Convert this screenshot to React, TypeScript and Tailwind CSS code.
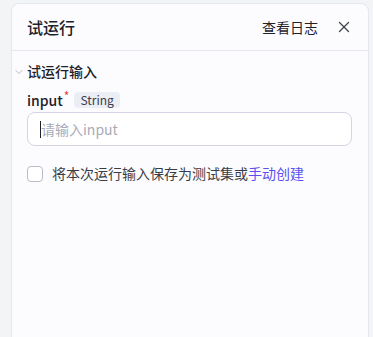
import { X, ChevronDown } from "lucide-react";

export default function App() {
  return (
    <div
      className="h-[337px] w-[373px] overflow-hidden bg-[#f3f4f6] pl-[11px] pr-[4px] pt-[3px]"
      style={{ fontFamily: '"Noto Sans CJK SC", "Noto Sans", sans-serif' }}
    >
      <div className="h-[360px] rounded-lg border border-[#e6e7ee] bg-[#fcfcfe]">
        {/* header */}
        <div className="flex h-[47px] items-center justify-between border-b border-[#e6e7ee] pl-[15px] pr-[15px]">
          <span className="text-[16px] font-medium text-[#1f2129]">试运行</span>
          <div className="flex items-center gap-[17px]">
            <span className="text-[14px] text-[#1f2129]">查看日志</span>
            <X size={18} strokeWidth={1.7} className="text-[#41434d]" />
          </div>
        </div>

        {/* section */}
        <div className="pt-[11px]">
          <div className="flex h-[18px] items-center pl-[1px]">
            <ChevronDown size={12} strokeWidth={1.6} className="mt-[2px] text-[#a6a8b4]" />
            <span className="ml-[2px] text-[14px] font-medium text-[#1f2129]">试运行输入</span>
          </div>

          <div className="pl-[15px] pr-[16px]">
            <div className="mt-[12px] flex h-[16px] items-center">
              <span className="text-[14px] font-medium text-[#1f2129]">input</span>
              <span className="relative -top-[4px] ml-[1px] text-[12px] leading-none text-[#f03e3e]">*</span>
              <span className="ml-[5px] rounded-[4px] bg-[#eceef6] px-[6px] text-[12px] leading-[16px] text-[#3a3c4a]">
                String
              </span>
            </div>

            <div className="mt-[4px] flex h-[34px] items-center rounded-[8px] border border-[#d3d4e6] bg-white px-[12px]">
              <span className="h-[17px] w-px bg-[#1f2129]" />
              <span className="text-[14px] text-[#a9abb8]">请输入input</span>
            </div>

            <div className="mt-[17px] flex items-center">
              <span className="h-[16px] w-[16px] rounded-[4px] border border-[#b9bbc6] bg-white" />
              <span className="ml-[9px] text-[14px] text-[#3a3c48]">
                将本次运行输入保存为测试集或<span className="text-[#5b4ff0]">手动创建</span>
              </span>
            </div>
          </div>
        </div>
      </div>
    </div>
  );
}
